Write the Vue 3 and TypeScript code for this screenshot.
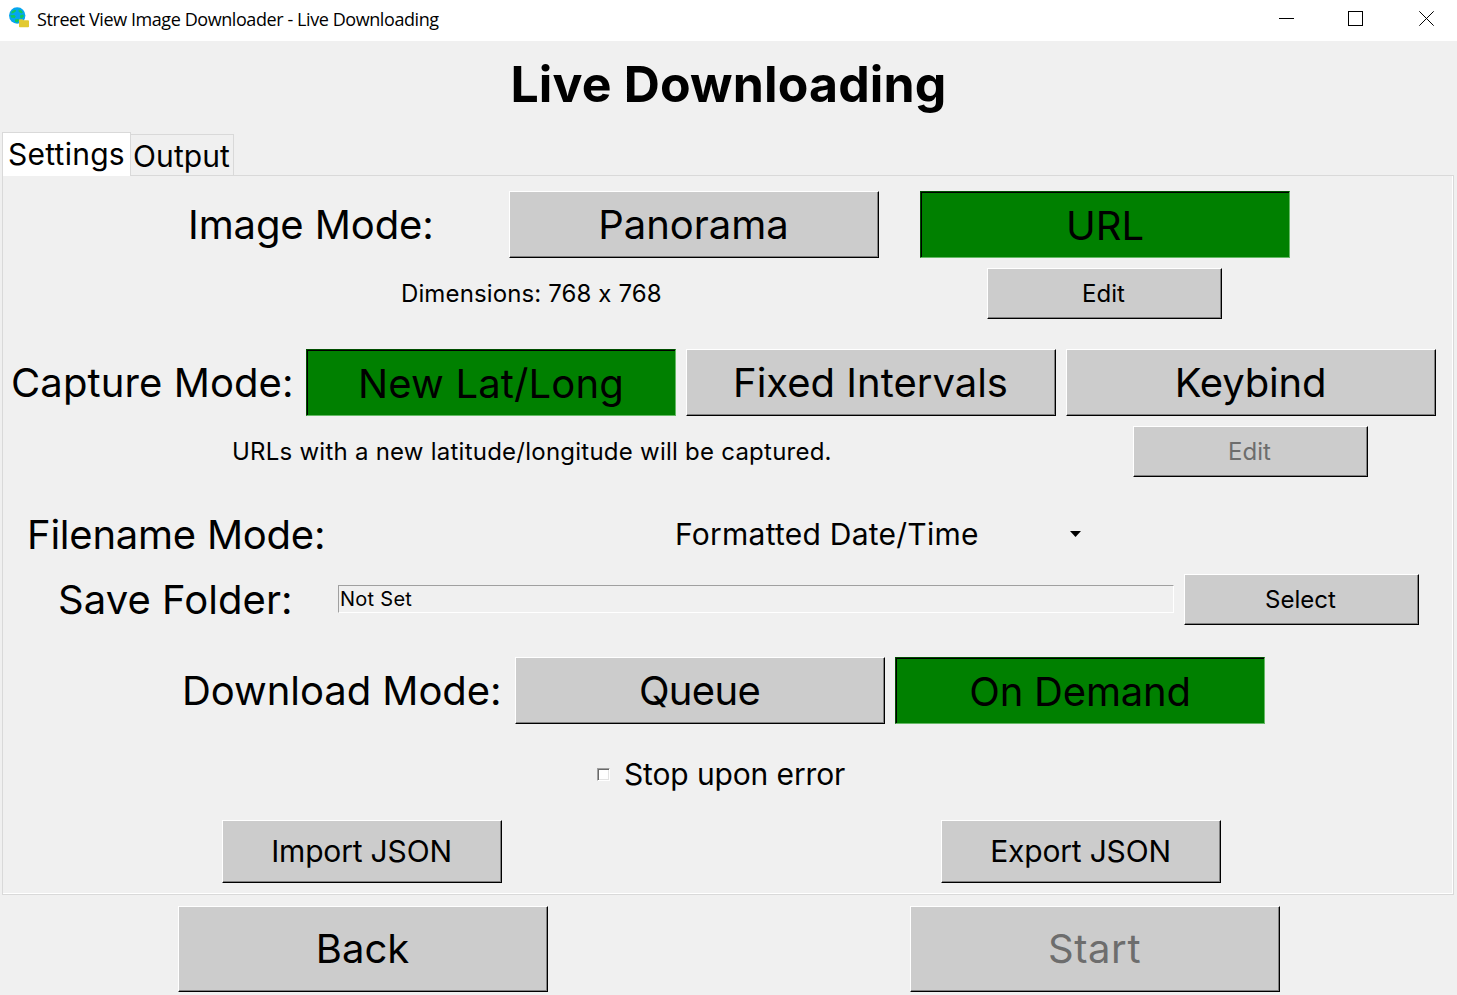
<script setup lang="ts">
import { ref } from 'vue'

type Tab = 'settings' | 'output'

const tab = ref<Tab>('settings')
const imageMode = ref('url')
const captureMode = ref('latlong')
const downloadMode = ref('demand')
const stopOnError = ref(false)
</script>

<template>
  <div class="window">
    <header class="titlebar">
      <svg class="app-icon" width="22" height="22" viewBox="0 0 22 22">
        <circle cx="9.2" cy="8.5" r="8.2" fill="#05a5f0" />
        <path d="M3.5 4.5l3-1.8 1.6.5-.6 1.6-2.6 1.4-1.6.2zM10.5 2.2l3 1.2 1.4 2-1.6 1-2.6-1.6zM2.3 8.2l4-.2 1.4 1.4-1 1.6-3.6-.4zM12.4 8l3-.6.4 2.2-2.2 2-1.6-1.2zM7 12.4l3.4-.6.6 1.6-1.8 2-2.2-.6z" fill="#12c95c" />
        <path d="M11 13.2q0-.9.9-.9h2.6l1 1h4.6q.9 0 .9.9v5.2q0 .8-.9.8h-8.2q-.9 0-.9-.8z" fill="#e2c930" />
      </svg>
      <span class="caption">Street View Image Downloader - Live Downloading</span>
      <svg class="controls" width="160" height="20" viewBox="0 0 160 20" fill="none" stroke="#000">
        <path d="M0 9.5h15" />
        <rect x="69.5" y="2.5" width="14" height="14" />
        <path d="M140.3 2.3l14.4 14.4M154.7 2.3l-14.4 14.4" />
      </svg>
    </header>

    <h1 class="heading">Live Downloading</h1>

    <nav class="tabs">
      <div class="tab" :class="{ active: tab === 'settings' }" @click="tab = 'settings'">Settings</div>
      <div class="tab" :class="{ active: tab === 'output' }" @click="tab = 'output'">Output</div>
    </nav>

    <main class="pane">
      <section class="row image">
        <span class="label">Image Mode:</span>
        <button class="btn large" :class="{ on: imageMode === 'panorama' }" @click="imageMode = 'panorama'">Panorama</button>
        <button class="btn large url" :class="{ on: imageMode === 'url' }" @click="imageMode = 'url'">URL</button>
      </section>
      <section class="row dims">
        <span class="note">Dimensions: 768 x 768</span>
        <button class="btn small">Edit</button>
      </section>

      <section class="row capture">
        <span class="label">Capture Mode:</span>
        <button class="btn large latlong" :class="{ on: captureMode === 'latlong' }" @click="captureMode = 'latlong'">New Lat/Long</button>
        <button class="btn large" :class="{ on: captureMode === 'fixed' }" @click="captureMode = 'fixed'">Fixed Intervals</button>
        <button class="btn large keybind" :class="{ on: captureMode === 'keybind' }" @click="captureMode = 'keybind'">Keybind</button>
      </section>
      <section class="row hint">
        <span class="note">URLs with a new latitude/longitude will be captured.</span>
        <button class="btn small" disabled>Edit</button>
      </section>

      <section class="row filename">
        <span class="label">Filename Mode:</span>
        <span class="select">Formatted Date/Time</span>
        <svg class="arrow" width="11" height="6" viewBox="0 0 11 6"><path d="M0 0h11L5.5 6z" /></svg>
      </section>

      <section class="row folder">
        <span class="label">Save Folder:</span>
        <div class="field">Not Set</div>
        <button class="btn small">Select</button>
      </section>

      <section class="row download">
        <span class="label">Download Mode:</span>
        <button class="btn large queue" :class="{ on: downloadMode === 'queue' }" @click="downloadMode = 'queue'">Queue</button>
        <button class="btn large demand" :class="{ on: downloadMode === 'demand' }" @click="downloadMode = 'demand'">On Demand</button>
      </section>

      <section class="row stop" @click="stopOnError = !stopOnError">
        <span class="check">{{ stopOnError ? '✓' : '' }}</span>
        <span class="check-label">Stop upon error</span>
      </section>

      <section class="row json">
        <button class="btn medium">Import JSON</button>
        <button class="btn medium">Export JSON</button>
      </section>
    </main>

    <footer class="row actions">
      <button class="btn large tall">Back</button>
      <button class="btn large tall start" disabled>Start</button>
    </footer>
  </div>
</template>

<style>
html,
body {
  margin: 0;
  background: #f0f0f0;
  overflow: hidden;
}
</style>

<style scoped>
.window {
  box-sizing: border-box;
  width: 1457px;
  height: 995px;
  overflow: hidden;
  display: flex;
  flex-direction: column;
  background: #f0f0f0;
  color: #000;
  font-family: Inter, "Liberation Sans", sans-serif;
  font-weight: 400;
  font-feature-settings: "calt" 0;
  white-space: nowrap;
}
.titlebar {
  display: flex;
  height: 41px;
  flex: none;
  background: #fff;
}
.app-icon {
  margin: 7px 0 0 8px;
}
.caption {
  margin-left: 7px;
  width: 1242px;
  font: 400 18px/38px "Open Sans", "Noto Sans", sans-serif;
  letter-spacing: -0.42px;
}
.controls {
  margin-top: 9px;
}
.heading {
  margin: 0;
  height: 91px;
  flex: none;
  font-size: 50px;
  line-height: 86px;
  font-weight: 700;
  letter-spacing: 0.15px;
  text-align: center;
}
.tabs {
  display: flex;
  align-items: flex-end;
  height: 43px;
  flex: none;
  padding-left: 2px;
  font-size: 30px;
}
.tab {
  box-sizing: border-box;
  width: 103px;
  height: 41px;
  padding-left: 2px;
  border: 1px solid #d9d9d9;
  border-width: 1px 1px 0 0;
  line-height: 43px;
  letter-spacing: 0.1px;
}
.tab.active {
  position: relative;
  width: 129px;
  height: 44px;
  margin-bottom: -1px;
  padding-left: 5px;
  border-left-width: 1px;
  background: #fff;
  letter-spacing: 0.25px;
}
.pane {
  box-sizing: border-box;
  width: 1452px;
  height: 720px;
  flex: none;
  margin-left: 2px;
  padding-top: 15px;
  border: 1px solid #d9d9d9;
  box-shadow: inset -1px -1px #fff;
}
.row {
  display: flex;
  align-items: center;
}
.label {
  flex: none;
  font-size: 40px;
  line-height: 66px;
}
.note {
  flex: none;
  font-size: 24px;
}
.btn {
  box-sizing: border-box;
  flex: none;
  padding: 0;
  border: 1px solid;
  border-color: #fff #000 #000 #fff;
  border-radius: 0;
  background: #ccc;
  box-shadow: inset -1px -1px #808080;
  color: #000;
  font-family: inherit;
  font-weight: inherit;
  font-feature-settings: inherit;
  text-align: center;
}
.btn:disabled {
  color: #6d6d6d;
}
.large {
  width: 370px;
  height: 67px;
  padding-right: 1px;
  font-size: 40px;
}
.large.tall {
  height: 86px;
  padding-bottom: 2px;
}
.medium {
  width: 280px;
  height: 63px;
  padding: 0 1px 2px 0;
  font-size: 30px;
  letter-spacing: -0.18px;
}
.small {
  width: 235px;
  height: 51px;
  padding-right: 2px;
  font-size: 24px;
}
.btn.on {
  padding: 2px 0 0;
  background: #008000;
  border-color: #004d00 #66b966 #66b966 #004d00;
  box-shadow: inset 1px 1px #000;
}
.image .label {
  width: 321px;
  margin-left: 185px;
  letter-spacing: -0.1px;
}
.image .url {
  margin-left: 41px;
}
.dims {
  margin-top: 10px;
}
.dims .note {
  width: 586px;
  margin-left: 398px;
  letter-spacing: 0.12px;
}
.capture {
  margin-top: 30px;
  gap: 10px;
}
.capture .label {
  width: 285px;
  margin-left: 8px;
  letter-spacing: 0.1px;
}
.capture .latlong {
  letter-spacing: 0.15px;
}
.capture .keybind {
  letter-spacing: -0.2px;
}
.hint {
  margin-top: 10px;
}
.hint .note {
  width: 901px;
  margin-left: 229px;
  letter-spacing: 0.24px;
}
.filename {
  height: 50px;
  margin-top: 33px;
}
.filename .label {
  width: 648px;
  margin-left: 24px;
  letter-spacing: -0.23px;
}
.select {
  width: 395px;
  margin-top: -2px;
  font-size: 30px;
  letter-spacing: 0.25px;
}
.arrow {
  margin-top: -2px;
}
.folder {
  height: 51px;
  margin-top: 14px;
}
.folder .label {
  width: 280px;
  margin-left: 55px;
  letter-spacing: 0.06px;
}
.field {
  box-sizing: border-box;
  width: 836px;
  height: 28px;
  margin: 0 10px 1px 0;
  padding-left: 1px;
  border: 1px solid;
  border-color: #a0a0a0 #fff #fff #a0a0a0;
  font-size: 20px;
  line-height: 26px;
  letter-spacing: 0.27px;
}
.download {
  margin-top: 32px;
  gap: 10px;
}
.download .label {
  width: 323px;
  margin-left: 179px;
  letter-spacing: -0.05px;
}
.download .queue {
  letter-spacing: -0.7px;
}
.download .demand {
  letter-spacing: -0.2px;
}
.stop {
  height: 50px;
  margin-top: 25px;
}
.check {
  box-sizing: border-box;
  width: 13px;
  height: 13px;
  margin-left: 594px;
  border: 1px solid;
  border-color: #a0a0a0 #fff #fff #a0a0a0;
  background: #fff;
  box-shadow: inset 1px 1px #696969, inset -1px -1px #e3e3e3;
  font-size: 10px;
  line-height: 11px;
}
.check-label {
  margin-left: 14px;
  font-size: 30px;
  letter-spacing: -0.13px;
}
.json {
  margin-top: 21px;
  padding-left: 219px;
  gap: 439px;
}
.actions {
  margin-top: 11px;
  padding-left: 178px;
  gap: 362px;
}
.actions .start {
  letter-spacing: 0.6px;
}
</style>
